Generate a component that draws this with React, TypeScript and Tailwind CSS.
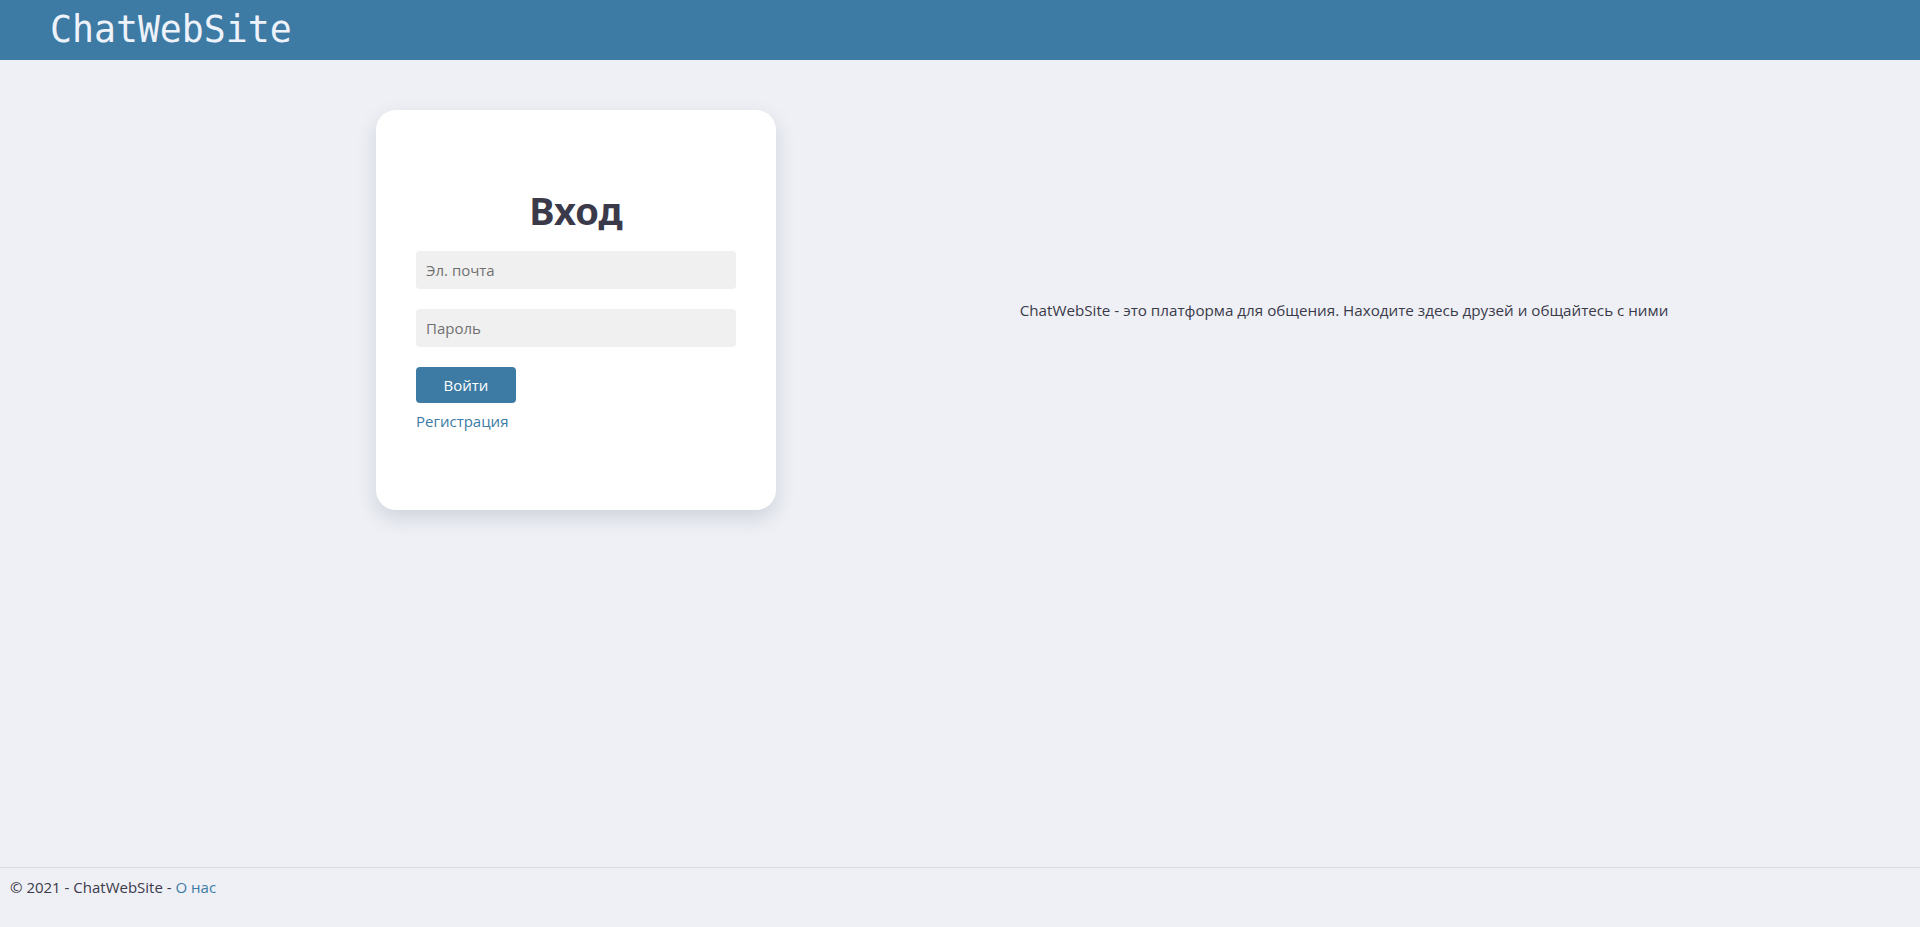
import React, { useState } from "react";

const App = () => {
  const [email, setEmail] = useState("");
  const [password, setPassword] = useState("");

  return (
    <div className="min-h-screen flex flex-col bg-[#eef0f5] font-['Open_Sans',sans-serif] text-[#3b3a4a]">
      <header className="h-[60px] bg-[#3d7ba4] flex items-center pl-[50px]">
        <span className="text-[36.5px] leading-none text-[#eef2fb] font-['DejaVu_Sans_Mono',monospace]">
          ChatWebSite
        </span>
      </header>

      <main className="flex-1 flex items-start pt-[50px] pl-[376px]">
        {/* login card */}
        <div className="w-[400px] h-[400px] bg-white rounded-[20px] shadow-[0_8px_20px_rgba(40,50,90,0.15)] flex flex-col pt-[82px] px-[40px]">
          <h1 className="text-center text-[38px] font-bold leading-[36px] mb-[23px] text-[#3b3a4a] font-['Noto_Sans',sans-serif]">
            Вход
          </h1>
          <input
            className="h-[38px] w-full rounded-[4px] bg-[#f0f0f0] px-[10px] text-[15px] placeholder:text-[#707070] outline-none"
            placeholder="Эл. почта"
            value={email}
            onChange={(e) => setEmail(e.target.value)}
          />
          <input
            type="password"
            className="h-[38px] w-full rounded-[4px] bg-[#f0f0f0] px-[10px] text-[15px] placeholder:text-[#707070] outline-none mt-[20px]"
            placeholder="Пароль"
            value={password}
            onChange={(e) => setPassword(e.target.value)}
          />
          <button className="mt-[20px] w-[100px] h-[36px] rounded-[4px] bg-[#3d7ba4] text-white text-[15px]">
            Войти
          </button>
          <a href="#" className="mt-[7px] text-[15px] text-[#3d7ba4] leading-[22px]">
            Регистрация
          </a>
        </div>

        {/* about text */}
        <div className="w-[1136px] h-[400px] flex items-center justify-center">
          <p className="text-[15.2px]">
            ChatWebSite - это платформа для общения. Находите здесь друзей и общайтесь с ними
          </p>
        </div>
      </main>

      <footer className="h-[60px] border-t border-[#d9dae2] pl-[10px] pt-[8px] text-[15px]">
        © 2021 - ChatWebSite - <a href="#" className="text-[#3d7ba4]">О нас</a>
      </footer>
    </div>
  );
};

export default App;
